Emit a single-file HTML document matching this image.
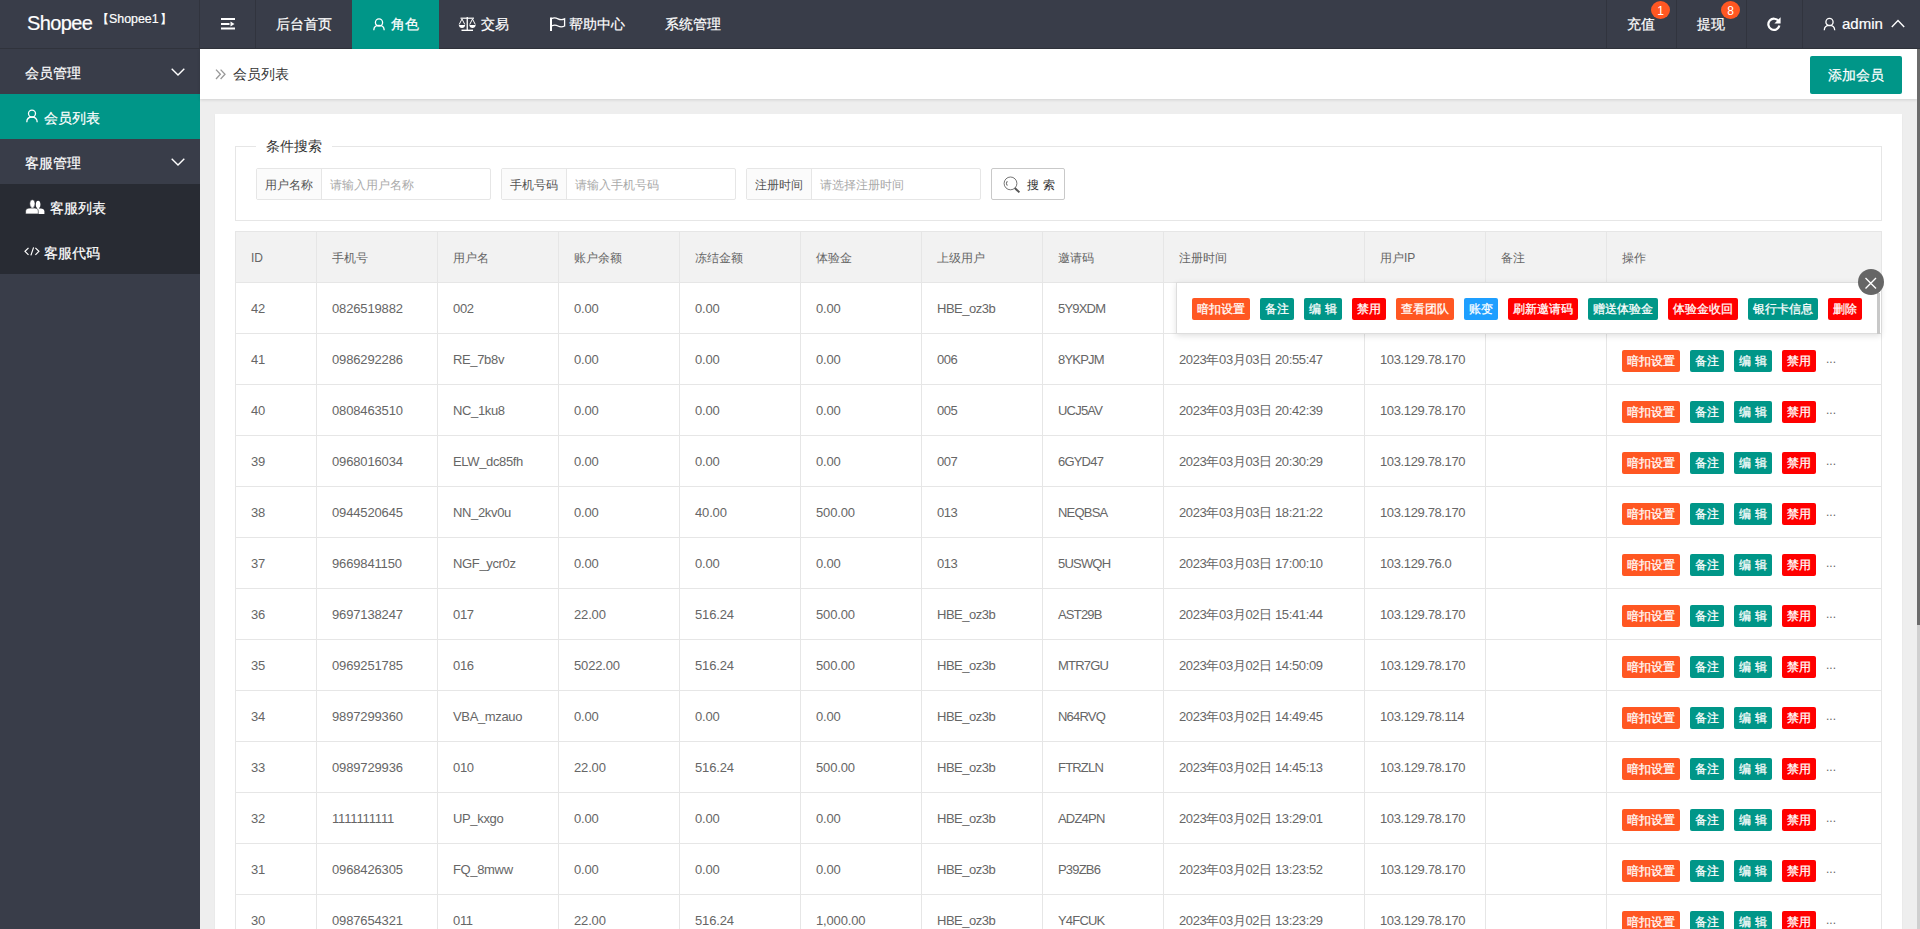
<!DOCTYPE html><html><head><meta charset="utf-8"><title>Shopee</title><style>*{margin:0;padding:0;box-sizing:border-box}
html,body{width:1920px;height:929px;overflow:hidden;background:#eee;font-family:"Liberation Sans",sans-serif;color:#666;font-size:14px}
.abs{position:absolute}
.header{position:absolute;left:0;top:0;width:1920px;height:49px;background:#393D49;border-bottom:1px solid #30333c}
.side{position:absolute;left:0;top:49px;width:200px;height:880px;background:#393D49}
.crumb{position:absolute;left:200px;top:49px;width:1717px;height:50px;background:#fff;box-shadow:0 1px 3px rgba(0,0,0,.12)}
.card{position:absolute;left:215px;top:114px;width:1687px;height:900px;background:#fff;box-shadow:0 1px 2px 0 rgba(0,0,0,.05)}
.sbar{position:absolute;left:1917px;top:49px;width:3px;height:880px;background:#cfcfcf}
.sthumb{position:absolute;left:1917px;top:49px;width:3px;height:576px;background:#6b6b6b}
.hdiv{position:absolute;top:0;width:1px;height:48px;background:#31343e}
.nav{position:absolute;top:0;height:48px;line-height:48px;color:#fff;font-size:14px;white-space:nowrap}
.tbl{}
.thead{position:absolute;left:235px;width:1646px;background:#f2f2f2}
.th{position:absolute;font-size:12px;color:#666;white-space:nowrap;padding-top:2px}
.td{position:absolute;font-size:13px;letter-spacing:-0.15px;color:#666;height:51px;line-height:53px;white-space:nowrap}
.hl{position:absolute;left:235px;width:1647px;height:1px;background:#e6e6e6}
.vl{position:absolute;width:1px;height:700px;background:#e6e6e6}
.ops{position:absolute;height:22px;white-space:nowrap;font-size:0}
.b{display:inline-block;height:22px;line-height:22px;font-size:12px;color:#fff;text-align:center;border-radius:2px;margin-right:10px;vertical-align:top}
.o{background:#FF5722}.g{background:#009688}.r{background:#FF0000}.bl{background:#1E9FFF}
.more{display:inline-block;font-size:12px;color:#666;line-height:18px;vertical-align:top}
.t{position:absolute;white-space:nowrap;color:#fff;font-size:14px;line-height:18px}
.ic{position:absolute;display:block}
.badge{position:absolute;width:19px;height:18px;border-radius:50%;background:#FF5722;color:#fff;font-size:12px;line-height:20px;text-align:center}
.btn{position:absolute;background:#009688;color:#fff;font-size:14px;text-align:center;border-radius:2px}
.fs{position:absolute;border:1px solid #e6e6e6}
.ig{position:absolute;height:32px;border:1px solid #e6e6e6;border-radius:2px;background:#fff}
.ig .lab{position:absolute;left:0;top:0;width:65px;height:30px;line-height:32px;background:#fbfbfb;border-right:1px solid #e6e6e6;font-size:12px;color:#555;padding-left:8px;white-space:nowrap}
.ig .ph{position:absolute;left:73px;top:0;height:30px;line-height:32px;font-size:12px;color:#aaa;white-space:nowrap}
.sbtn{position:absolute;border:1px solid #c9c9c9;border-radius:2px;background:#fff}
.tip{position:absolute;background:#fff;border:1px solid #ddd;border-right:none;box-shadow:0 2px 6px rgba(0,0,0,.12)}
.close{position:absolute;left:1858px;top:269px;width:26px;height:26px;border-radius:50%;background:#666}
.header .t,.side .t,.btn{-webkit-text-stroke:0.2px #fff}
.b{-webkit-text-stroke:0.25px #fff}
</style></head><body>
<div class="header">
  <div class="t" style="left:27px;top:10px;font-size:20px;letter-spacing:-0.6px;line-height:26px">Shopee</div>
  <div class="t" style="left:97px;top:11px;font-size:12px;line-height:16px">【<span style="font-size:12.4px">Shopee1</span><span style="margin-left:1px">】</span></div>
  <div class="hdiv" style="left:199px"></div>
  <svg class="ic" style="left:221px;top:17px" width="15" height="13" viewBox="0 0 15 13"><rect x="0" y="1" width="14" height="2" fill="#fff"/><rect x="0" y="6" width="8.5" height="2" fill="#fff"/><path d="M9.5 4.5 L13.5 7 L9.5 9.5Z" fill="#fff"/><rect x="0" y="10.5" width="14" height="2" fill="#fff"/></svg>
  <div class="hdiv" style="left:255px"></div>
  <div class="t" style="left:276px;top:15px">后台首页</div>
  <div class="abs" style="left:352px;top:0;width:87px;height:49px;background:#009688"></div>
  <svg class="ic" style="left:373px;top:17px" width="13" height="14" viewBox="0 0 13 14"><circle cx="6" cy="5.5" r="3.6" fill="none" stroke="#fff" stroke-width="1.3"/><path d="M0.8 13.2 C0.8 9.8 3 8.3 6 8.3 C9 8.3 11.2 9.8 11.2 13.2" fill="none" stroke="#fff" stroke-width="1.3"/></svg>
  <div class="t" style="left:391px;top:15px">角色</div>
  <svg class="ic" style="left:458px;top:16px" width="19" height="16" viewBox="0 0 19 16"><rect x="8.6" y="1" width="1.3" height="13" fill="#fff"/><rect x="2.5" y="1.6" width="13.5" height="1.2" fill="#fff"/><rect x="3.5" y="13.6" width="11.5" height="1.4" fill="#fff"/><path d="M4 3 L1.2 8.5 M4 3 L6.8 8.5 M14.5 3 L11.7 8.5 M14.5 3 L17.3 8.5" stroke="#fff" stroke-width="1" fill="none"/><path d="M0.8 9 H7.2 C7 11 5.8 12 4 12 C2.2 12 1 11 0.8 9Z M11.3 9 H17.7 C17.5 11 16.3 12 14.5 12 C12.7 12 11.5 11 11.3 9Z" fill="#fff"/></svg>
  <div class="t" style="left:481px;top:15px">交易</div>
  <svg class="ic" style="left:550px;top:17px" width="16" height="14" viewBox="0 0 16 14"><rect x="0" y="0.5" width="2" height="13.5" fill="#fff"/><path d="M1.5 1.6 C4 0.4 6 0.8 8 1.8 C10 2.8 12 3 14.6 1.8 V9 C12 10.2 10 10 8 9 C6 8 4 7.8 1.5 9" fill="none" stroke="#fff" stroke-width="1.3"/></svg>
  <div class="t" style="left:569px;top:15px">帮助中心</div>
  <div class="t" style="left:665px;top:15px">系统管理</div>
  <div class="hdiv" style="left:1606px"></div>
  <div class="t" style="left:1627px;top:15px">充值</div>
  <div class="badge" style="left:1651px;top:1px">1</div>
  <div class="hdiv" style="left:1676px"></div>
  <div class="t" style="left:1697px;top:15px">提现</div>
  <div class="badge" style="left:1721px;top:1px">8</div>
  <div class="hdiv" style="left:1746px"></div>
  <svg class="ic" style="left:1766px;top:16px" width="16" height="16" viewBox="0 0 16 16"><path d="M12.6 5.2 A5.6 5.6 0 1 0 13.4 9.6" fill="none" stroke="#fff" stroke-width="2.2"/><path d="M14.6 1.2 V7.4 H8.4Z" fill="#fff"/></svg>
  <div class="hdiv" style="left:1802px"></div>
  <svg class="ic" style="left:1823px;top:17px" width="13" height="14" viewBox="0 0 13 14"><circle cx="6.5" cy="5" r="3.6" fill="none" stroke="#fff" stroke-width="1.3"/><path d="M1.3 13.2 C1.3 9.8 3.5 8.3 6.5 8.3 C9.5 8.3 11.7 9.8 11.7 13.2" fill="none" stroke="#fff" stroke-width="1.3"/></svg>
  <div class="t" style="left:1842px;top:14px;font-size:15px;line-height:20px">admin</div>
  <svg class="ic" style="left:1891px;top:19px" width="14" height="9" viewBox="0 0 14 9"><path d="M0.8 8 L7 1.6 L13.2 8" fill="none" stroke="#fff" stroke-width="1.4"/></svg>
</div>
<div class="side">
  <div class="t" style="left:25px;top:15px">会员管理</div>
  <svg class="ic" style="left:171px;top:19px" width="14" height="8" viewBox="0 0 14 8"><path d="M0.7 0.7 L7 7 L13.3 0.7" fill="none" stroke="#fff" stroke-width="1.4"/></svg>
  <div class="abs" style="left:0;top:45px;width:200px;height:45px;background:#009688"></div>
  <svg class="ic" style="left:26px;top:60px" width="13" height="14" viewBox="0 0 13 14"><circle cx="6" cy="4.6" r="3.5" fill="none" stroke="#fff" stroke-width="1.3"/><path d="M0.8 13.2 C0.8 9.6 3 8 6 8 C9 8 11.2 9.6 11.2 13.2" fill="none" stroke="#fff" stroke-width="1.3"/></svg>
  <div class="t" style="left:44px;top:60px">会员列表</div>
  <div class="t" style="left:25px;top:105px">客服管理</div>
  <svg class="ic" style="left:171px;top:109px" width="14" height="8" viewBox="0 0 14 8"><path d="M0.7 0.7 L7 7 L13.3 0.7" fill="none" stroke="#fff" stroke-width="1.4"/></svg>
  <div class="abs" style="left:0;top:135px;width:200px;height:90px;background:#282B33"></div>
  <svg class="ic" style="left:25px;top:150px" width="20" height="16" viewBox="0 0 20 16"><ellipse cx="13.1" cy="5.5" rx="2.3" ry="3.8" fill="#fff"/><rect x="12.2" y="8" width="1.8" height="2" fill="#fff"/><path d="M11.6 9.5 H15.6 C17.9 9.5 19.4 10.6 19.4 12.6 V14.9 H11.6 Z" fill="#fff"/><ellipse cx="7.4" cy="4.7" rx="2.6" ry="3.9" fill="#fff" stroke="#282B33" stroke-width="0.5"/><rect x="6.4" y="7.8" width="2" height="1.6" fill="#fff"/><path d="M0.6 14.9 V12.1 C0.6 10.1 2.4 9.1 5 9.1 H9.4 C11.9 9.1 13.3 10.1 13.3 12.1 V14.9 Z" fill="#fff" stroke="#282B33" stroke-width="0.6"/></svg>
  <div class="t" style="left:50px;top:150px">客服列表</div>
  <svg class="ic" style="left:24px;top:198px" width="17" height="9" viewBox="0 0 17 9"><path d="M4.5 0.8 L1 4.3 L4.5 7.8 M11.4 0.8 L14.9 4.3 L11.4 7.8 M9.6 0.4 L6.9 8.4" fill="none" stroke="#fff" stroke-width="1.2"/></svg>
  <div class="t" style="left:44px;top:195px">客服代码</div>
</div>
<div class="crumb">
  <svg class="ic" style="left:15px;top:20px" width="12" height="12" viewBox="0 0 12 12"><path d="M1 0.6 L5.4 5.3 L1 10 M5.6 0.6 L10 5.3 L5.6 10" fill="none" stroke="#999" stroke-width="1.3"/></svg>
  <div class="t" style="left:33px;top:16px;color:#333">会员列表</div>
  <div class="btn" style="left:1610px;top:7px;width:92px;height:38px;line-height:38px">添加会员</div>
</div>
<div class="card"></div>
<div class="fs" style="left:235px;top:146px;width:1647px;height:75px"></div>
<div class="t" style="left:256px;top:137px;padding:0 10px;background:#fff;color:#333;line-height:18px">条件搜索</div>
<div class="ig" style="left:256px;top:168px;width:235px"><div class="lab">用户名称</div><div class="ph">请输入用户名称</div></div>
<div class="ig" style="left:501px;top:168px;width:235px"><div class="lab">手机号码</div><div class="ph">请输入手机号码</div></div>
<div class="ig" style="left:746px;top:168px;width:235px"><div class="lab">注册时间</div><div class="ph">请选择注册时间</div></div>
<div class="sbtn" style="left:991px;top:168px;width:74px;height:32px">
  <svg class="ic" style="left:11px;top:7px" width="18" height="18" viewBox="0 0 18 18"><circle cx="7.5" cy="7.4" r="6.4" fill="none" stroke="#666" stroke-width="0.9"/><path d="M4.2 5.2 A3.8 3.8 0 0 0 4.2 9.6" fill="none" stroke="#555" stroke-width="1"/><path d="M11.8 12 L16.4 16.4" stroke="#555" stroke-width="2" fill="none"/></svg>
  <div class="t" style="left:35px;top:8px;font-size:12px;color:#333;letter-spacing:4px;line-height:16px">搜索</div>
</div>
<div class="sbar"></div><div class="sthumb"></div>

<div class="tbl"><div class="thead" style="top:231px;height:51px"></div><div class="th" style="left:251px;top:231px;height:51px;line-height:51px">ID</div><div class="th" style="left:332px;top:231px;height:51px;line-height:51px">手机号</div><div class="th" style="left:453px;top:231px;height:51px;line-height:51px">用户名</div><div class="th" style="left:574px;top:231px;height:51px;line-height:51px">账户余额</div><div class="th" style="left:695px;top:231px;height:51px;line-height:51px">冻结金额</div><div class="th" style="left:816px;top:231px;height:51px;line-height:51px">体验金</div><div class="th" style="left:937px;top:231px;height:51px;line-height:51px">上级用户</div><div class="th" style="left:1058px;top:231px;height:51px;line-height:51px">邀请码</div><div class="th" style="left:1179px;top:231px;height:51px;line-height:51px">注册时间</div><div class="th" style="left:1380px;top:231px;height:51px;line-height:51px">用户IP</div><div class="th" style="left:1501px;top:231px;height:51px;line-height:51px">备注</div><div class="th" style="left:1622px;top:231px;height:51px;line-height:51px">操作</div><div class="hl" style="top:231px"></div><div class="hl" style="top:282px"></div><div class="hl" style="top:333px"></div><div class="hl" style="top:384px"></div><div class="hl" style="top:435px"></div><div class="hl" style="top:486px"></div><div class="hl" style="top:537px"></div><div class="hl" style="top:588px"></div><div class="hl" style="top:639px"></div><div class="hl" style="top:690px"></div><div class="hl" style="top:741px"></div><div class="hl" style="top:792px"></div><div class="hl" style="top:843px"></div><div class="hl" style="top:894px"></div><div class="hl" style="top:945px"></div><div class="vl" style="left:235px;top:231px"></div><div class="vl" style="left:316px;top:231px"></div><div class="vl" style="left:437px;top:231px"></div><div class="vl" style="left:558px;top:231px"></div><div class="vl" style="left:679px;top:231px"></div><div class="vl" style="left:800px;top:231px"></div><div class="vl" style="left:921px;top:231px"></div><div class="vl" style="left:1042px;top:231px"></div><div class="vl" style="left:1163px;top:231px"></div><div class="vl" style="left:1364px;top:231px"></div><div class="vl" style="left:1485px;top:231px"></div><div class="vl" style="left:1606px;top:231px"></div><div class="vl" style="left:1881px;top:231px"></div><div class="td" style="left:251px;top:282px">42</div><div class="td" style="left:332px;top:282px">0826519882</div><div class="td" style="left:453px;top:282px;letter-spacing:-0.35px">002</div><div class="td" style="left:574px;top:282px">0.00</div><div class="td" style="left:695px;top:282px">0.00</div><div class="td" style="left:816px;top:282px">0.00</div><div class="td" style="left:937px;top:282px;letter-spacing:-0.5px">HBE_oz3b</div><div class="td" style="left:1058px;top:282px;letter-spacing:-0.8px">5Y9XDM</div><div class="td" style="left:251px;top:333px">41</div><div class="td" style="left:332px;top:333px">0986292286</div><div class="td" style="left:453px;top:333px;letter-spacing:-0.35px">RE_7b8v</div><div class="td" style="left:574px;top:333px">0.00</div><div class="td" style="left:695px;top:333px">0.00</div><div class="td" style="left:816px;top:333px">0.00</div><div class="td" style="left:937px;top:333px;letter-spacing:-0.5px">006</div><div class="td" style="left:1058px;top:333px;letter-spacing:-0.8px">8YKPJM</div><div class="td" style="left:1179px;top:333px;letter-spacing:-0.37px">2023年03月03日 20:55:47</div><div class="td" style="left:1380px;top:333px;letter-spacing:-0.37px">103.129.78.170</div><div class="ops" style="left:1622px;top:350px"><span class="b o" style="width:58px">暗扣设置</span><span class="b g" style="width:34px">备注</span><span class="b g" style="width:38px">编&nbsp;辑</span><span class="b r" style="width:34px">禁用</span><span class="more">...</span></div><div class="td" style="left:251px;top:384px">40</div><div class="td" style="left:332px;top:384px">0808463510</div><div class="td" style="left:453px;top:384px;letter-spacing:-0.35px">NC_1ku8</div><div class="td" style="left:574px;top:384px">0.00</div><div class="td" style="left:695px;top:384px">0.00</div><div class="td" style="left:816px;top:384px">0.00</div><div class="td" style="left:937px;top:384px;letter-spacing:-0.5px">005</div><div class="td" style="left:1058px;top:384px;letter-spacing:-0.8px">UCJ5AV</div><div class="td" style="left:1179px;top:384px;letter-spacing:-0.37px">2023年03月03日 20:42:39</div><div class="td" style="left:1380px;top:384px;letter-spacing:-0.37px">103.129.78.170</div><div class="ops" style="left:1622px;top:401px"><span class="b o" style="width:58px">暗扣设置</span><span class="b g" style="width:34px">备注</span><span class="b g" style="width:38px">编&nbsp;辑</span><span class="b r" style="width:34px">禁用</span><span class="more">...</span></div><div class="td" style="left:251px;top:435px">39</div><div class="td" style="left:332px;top:435px">0968016034</div><div class="td" style="left:453px;top:435px;letter-spacing:-0.35px">ELW_dc85fh</div><div class="td" style="left:574px;top:435px">0.00</div><div class="td" style="left:695px;top:435px">0.00</div><div class="td" style="left:816px;top:435px">0.00</div><div class="td" style="left:937px;top:435px;letter-spacing:-0.5px">007</div><div class="td" style="left:1058px;top:435px;letter-spacing:-0.8px">6GYD47</div><div class="td" style="left:1179px;top:435px;letter-spacing:-0.37px">2023年03月03日 20:30:29</div><div class="td" style="left:1380px;top:435px;letter-spacing:-0.37px">103.129.78.170</div><div class="ops" style="left:1622px;top:452px"><span class="b o" style="width:58px">暗扣设置</span><span class="b g" style="width:34px">备注</span><span class="b g" style="width:38px">编&nbsp;辑</span><span class="b r" style="width:34px">禁用</span><span class="more">...</span></div><div class="td" style="left:251px;top:486px">38</div><div class="td" style="left:332px;top:486px">0944520645</div><div class="td" style="left:453px;top:486px;letter-spacing:-0.35px">NN_2kv0u</div><div class="td" style="left:574px;top:486px">0.00</div><div class="td" style="left:695px;top:486px">40.00</div><div class="td" style="left:816px;top:486px">500.00</div><div class="td" style="left:937px;top:486px;letter-spacing:-0.5px">013</div><div class="td" style="left:1058px;top:486px;letter-spacing:-0.8px">NEQBSA</div><div class="td" style="left:1179px;top:486px;letter-spacing:-0.37px">2023年03月03日 18:21:22</div><div class="td" style="left:1380px;top:486px;letter-spacing:-0.37px">103.129.78.170</div><div class="ops" style="left:1622px;top:503px"><span class="b o" style="width:58px">暗扣设置</span><span class="b g" style="width:34px">备注</span><span class="b g" style="width:38px">编&nbsp;辑</span><span class="b r" style="width:34px">禁用</span><span class="more">...</span></div><div class="td" style="left:251px;top:537px">37</div><div class="td" style="left:332px;top:537px">9669841150</div><div class="td" style="left:453px;top:537px;letter-spacing:-0.35px">NGF_ycr0z</div><div class="td" style="left:574px;top:537px">0.00</div><div class="td" style="left:695px;top:537px">0.00</div><div class="td" style="left:816px;top:537px">0.00</div><div class="td" style="left:937px;top:537px;letter-spacing:-0.5px">013</div><div class="td" style="left:1058px;top:537px;letter-spacing:-0.8px">5USWQH</div><div class="td" style="left:1179px;top:537px;letter-spacing:-0.37px">2023年03月03日 17:00:10</div><div class="td" style="left:1380px;top:537px;letter-spacing:-0.37px">103.129.76.0</div><div class="ops" style="left:1622px;top:554px"><span class="b o" style="width:58px">暗扣设置</span><span class="b g" style="width:34px">备注</span><span class="b g" style="width:38px">编&nbsp;辑</span><span class="b r" style="width:34px">禁用</span><span class="more">...</span></div><div class="td" style="left:251px;top:588px">36</div><div class="td" style="left:332px;top:588px">9697138247</div><div class="td" style="left:453px;top:588px;letter-spacing:-0.35px">017</div><div class="td" style="left:574px;top:588px">22.00</div><div class="td" style="left:695px;top:588px">516.24</div><div class="td" style="left:816px;top:588px">500.00</div><div class="td" style="left:937px;top:588px;letter-spacing:-0.5px">HBE_oz3b</div><div class="td" style="left:1058px;top:588px;letter-spacing:-0.8px">AST29B</div><div class="td" style="left:1179px;top:588px;letter-spacing:-0.37px">2023年03月02日 15:41:44</div><div class="td" style="left:1380px;top:588px;letter-spacing:-0.37px">103.129.78.170</div><div class="ops" style="left:1622px;top:605px"><span class="b o" style="width:58px">暗扣设置</span><span class="b g" style="width:34px">备注</span><span class="b g" style="width:38px">编&nbsp;辑</span><span class="b r" style="width:34px">禁用</span><span class="more">...</span></div><div class="td" style="left:251px;top:639px">35</div><div class="td" style="left:332px;top:639px">0969251785</div><div class="td" style="left:453px;top:639px;letter-spacing:-0.35px">016</div><div class="td" style="left:574px;top:639px">5022.00</div><div class="td" style="left:695px;top:639px">516.24</div><div class="td" style="left:816px;top:639px">500.00</div><div class="td" style="left:937px;top:639px;letter-spacing:-0.5px">HBE_oz3b</div><div class="td" style="left:1058px;top:639px;letter-spacing:-0.8px">MTR7GU</div><div class="td" style="left:1179px;top:639px;letter-spacing:-0.37px">2023年03月02日 14:50:09</div><div class="td" style="left:1380px;top:639px;letter-spacing:-0.37px">103.129.78.170</div><div class="ops" style="left:1622px;top:656px"><span class="b o" style="width:58px">暗扣设置</span><span class="b g" style="width:34px">备注</span><span class="b g" style="width:38px">编&nbsp;辑</span><span class="b r" style="width:34px">禁用</span><span class="more">...</span></div><div class="td" style="left:251px;top:690px">34</div><div class="td" style="left:332px;top:690px">9897299360</div><div class="td" style="left:453px;top:690px;letter-spacing:-0.35px">VBA_mzauo</div><div class="td" style="left:574px;top:690px">0.00</div><div class="td" style="left:695px;top:690px">0.00</div><div class="td" style="left:816px;top:690px">0.00</div><div class="td" style="left:937px;top:690px;letter-spacing:-0.5px">HBE_oz3b</div><div class="td" style="left:1058px;top:690px;letter-spacing:-0.8px">N64RVQ</div><div class="td" style="left:1179px;top:690px;letter-spacing:-0.37px">2023年03月02日 14:49:45</div><div class="td" style="left:1380px;top:690px;letter-spacing:-0.37px">103.129.78.114</div><div class="ops" style="left:1622px;top:707px"><span class="b o" style="width:58px">暗扣设置</span><span class="b g" style="width:34px">备注</span><span class="b g" style="width:38px">编&nbsp;辑</span><span class="b r" style="width:34px">禁用</span><span class="more">...</span></div><div class="td" style="left:251px;top:741px">33</div><div class="td" style="left:332px;top:741px">0989729936</div><div class="td" style="left:453px;top:741px;letter-spacing:-0.35px">010</div><div class="td" style="left:574px;top:741px">22.00</div><div class="td" style="left:695px;top:741px">516.24</div><div class="td" style="left:816px;top:741px">500.00</div><div class="td" style="left:937px;top:741px;letter-spacing:-0.5px">HBE_oz3b</div><div class="td" style="left:1058px;top:741px;letter-spacing:-0.8px">FTRZLN</div><div class="td" style="left:1179px;top:741px;letter-spacing:-0.37px">2023年03月02日 14:45:13</div><div class="td" style="left:1380px;top:741px;letter-spacing:-0.37px">103.129.78.170</div><div class="ops" style="left:1622px;top:758px"><span class="b o" style="width:58px">暗扣设置</span><span class="b g" style="width:34px">备注</span><span class="b g" style="width:38px">编&nbsp;辑</span><span class="b r" style="width:34px">禁用</span><span class="more">...</span></div><div class="td" style="left:251px;top:792px">32</div><div class="td" style="left:332px;top:792px">1111111111</div><div class="td" style="left:453px;top:792px;letter-spacing:-0.35px">UP_kxgo</div><div class="td" style="left:574px;top:792px">0.00</div><div class="td" style="left:695px;top:792px">0.00</div><div class="td" style="left:816px;top:792px">0.00</div><div class="td" style="left:937px;top:792px;letter-spacing:-0.5px">HBE_oz3b</div><div class="td" style="left:1058px;top:792px;letter-spacing:-0.8px">ADZ4PN</div><div class="td" style="left:1179px;top:792px;letter-spacing:-0.37px">2023年03月02日 13:29:01</div><div class="td" style="left:1380px;top:792px;letter-spacing:-0.37px">103.129.78.170</div><div class="ops" style="left:1622px;top:809px"><span class="b o" style="width:58px">暗扣设置</span><span class="b g" style="width:34px">备注</span><span class="b g" style="width:38px">编&nbsp;辑</span><span class="b r" style="width:34px">禁用</span><span class="more">...</span></div><div class="td" style="left:251px;top:843px">31</div><div class="td" style="left:332px;top:843px">0968426305</div><div class="td" style="left:453px;top:843px;letter-spacing:-0.35px">FQ_8mww</div><div class="td" style="left:574px;top:843px">0.00</div><div class="td" style="left:695px;top:843px">0.00</div><div class="td" style="left:816px;top:843px">0.00</div><div class="td" style="left:937px;top:843px;letter-spacing:-0.5px">HBE_oz3b</div><div class="td" style="left:1058px;top:843px;letter-spacing:-0.8px">P39ZB6</div><div class="td" style="left:1179px;top:843px;letter-spacing:-0.37px">2023年03月02日 13:23:52</div><div class="td" style="left:1380px;top:843px;letter-spacing:-0.37px">103.129.78.170</div><div class="ops" style="left:1622px;top:860px"><span class="b o" style="width:58px">暗扣设置</span><span class="b g" style="width:34px">备注</span><span class="b g" style="width:38px">编&nbsp;辑</span><span class="b r" style="width:34px">禁用</span><span class="more">...</span></div><div class="td" style="left:251px;top:894px">30</div><div class="td" style="left:332px;top:894px">0987654321</div><div class="td" style="left:453px;top:894px;letter-spacing:-0.35px">011</div><div class="td" style="left:574px;top:894px">22.00</div><div class="td" style="left:695px;top:894px">516.24</div><div class="td" style="left:816px;top:894px">1,000.00</div><div class="td" style="left:937px;top:894px;letter-spacing:-0.5px">HBE_oz3b</div><div class="td" style="left:1058px;top:894px;letter-spacing:-0.8px">Y4FCUK</div><div class="td" style="left:1179px;top:894px;letter-spacing:-0.37px">2023年03月02日 13:23:29</div><div class="td" style="left:1380px;top:894px;letter-spacing:-0.37px">103.129.78.170</div><div class="ops" style="left:1622px;top:911px"><span class="b o" style="width:58px">暗扣设置</span><span class="b g" style="width:34px">备注</span><span class="b g" style="width:38px">编&nbsp;辑</span><span class="b r" style="width:34px">禁用</span><span class="more">...</span></div></div>
<div class="tip" style="left:1176px;top:282px;width:705px;height:52px">
  <div class="ops" style="left:15px;top:15px"><span class="b o" style="width:58px">暗扣设置</span><span class="b g" style="width:34px">备注</span><span class="b g" style="width:38px">编&nbsp;辑</span><span class="b r" style="width:34px">禁用</span><span class="b o" style="width:58px">查看团队</span><span class="b bl" style="width:34px">账变</span><span class="b r" style="width:70px">刷新邀请码</span><span class="b g" style="width:70px">赠送体验金</span><span class="b r" style="width:70px">体验金收回</span><span class="b g" style="width:70px">银行卡信息</span><span class="b r" style="width:34px">删除</span></div>
  <div class="abs" style="left:700px;top:10px;width:3px;height:41px;background:#c8c8c8"></div>
</div>
<div class="close"><svg width="26" height="26" viewBox="0 0 26 26" style="display:block"><path d="M7.5 9 L18 19.5 M18 9 L7.5 19.5" stroke="#fff" stroke-width="1.4"/></svg></div>

</body></html>
